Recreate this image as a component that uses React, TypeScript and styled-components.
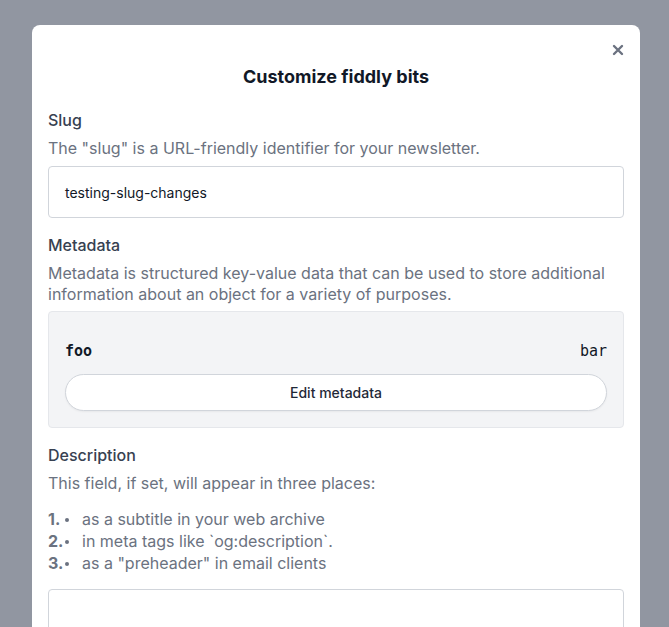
import React from 'react'
import styled, { createGlobalStyle } from 'styled-components'

const GlobalStyle = createGlobalStyle`
  html, body {
    margin: 0;
    padding: 0;
    height: 100%;
    overflow: hidden;
  }
  body {
    font-family: Inter, "Noto Sans", sans-serif;
    background: #9196a1;
  }
`

const Overlay = styled.div`
  min-height: 627px;
  padding: 25px 0 0 32px;
  box-sizing: border-box;
  background: #9196a1;
`

const Modal = styled.div`
  position: relative;
  width: 608px;
  min-height: 640px;
  box-sizing: border-box;
  background: #fff;
  border-radius: 8px 8px 0 0;
  padding: 40px 16px 24px;
`

const CloseButton = styled.button`
  position: absolute;
  top: 17px;
  right: 14px;
  width: 16px;
  height: 16px;
  padding: 0;
  border: 0;
  background: none;
  color: #6b7280;
  display: flex;
  align-items: center;
  justify-content: center;
  cursor: pointer;
`

const Title = styled.h2`
  margin: 0 0 19px;
  text-align: center;
  font-size: 18px;
  line-height: 24px;
  font-weight: 700;
  color: #111827;
`

const Field = styled.section`
  display: flex;
  flex-direction: column;
  margin-bottom: 15px;
`

const Label = styled.div`
  font-size: 16px;
  line-height: 24px;
  font-weight: 500;
  color: #374151;
  margin-bottom: 6px;
`

const Help = styled.p<{ $gap?: number }>`
  margin: 0 0 ${(p) => p.$gap ?? 7}px;
  font-size: 16px;
  line-height: 21px;
  color: #6b7280;
`

const TextInput = styled.div`
  height: 52px;
  box-sizing: border-box;
  border: 1px solid #d1d5db;
  border-radius: 4px;
  padding: 0 16px;
  display: flex;
  align-items: center;
  font-size: 14px;
  color: #111827;
`

const MetaBox = styled.div`
  background: #f3f4f6;
  border: 1px solid #e5e7eb;
  border-radius: 4px;
  padding: 27px 16px 16px;
  display: flex;
  flex-direction: column;
  gap: 11px;
`

const MetaRow = styled.div`
  display: flex;
  justify-content: space-between;
  font-family: "DejaVu Sans Mono", "Liberation Mono", monospace;
  font-size: 15px;
  line-height: 24px;
  color: #111827;
`

const MetaKey = styled.span`
  font-weight: 700;
`

const PillButton = styled.button`
  height: 37px;
  border: 1px solid #d1d5db;
  border-radius: 999px;
  background: #fff;
  font-family: Inter, sans-serif;
  font-size: 14px;
  font-weight: 500;
  color: #1f2937;
  box-shadow: 0 1px 2px rgba(0, 0, 0, 0.05);
  cursor: pointer;
`

const List = styled.ol`
  margin: 0 0 15px;
  padding: 0;
  list-style: none;
  display: flex;
  flex-direction: column;
`

const Item = styled.li`
  display: flex;
  align-items: center;
  height: 22px;
  font-size: 16px;
  line-height: 22px;
  color: #6b7280;
`

const Num = styled.span`
  font-weight: 700;
  width: 17px;
`

const Bullet = styled.span`
  width: 4px;
  height: 4px;
  border-radius: 50%;
  background: #6b7280;
  margin: 2px 13px 0 0;
`

const TextArea = styled.div`
  height: 100px;
  border: 1px solid #d1d5db;
  border-radius: 4px;
`

const uses = [
  'as a subtitle in your web archive',
  'in meta tags like `og:description`.',
  'as a "preheader" in email clients',
]

export default function App () {
  return (
    <>
      <GlobalStyle />
      <Overlay>
        <Modal>
          <CloseButton aria-label="Close">
            <svg width="12" height="12" viewBox="0 0 12 12">
              <path d="M2 2 L10 10 M10 2 L2 10" stroke="currentColor" strokeWidth="2.4" strokeLinecap="round" />
            </svg>
          </CloseButton>
          <Title>Customize fiddly bits</Title>

          <Field>
            <Label>Slug</Label>
            <Help>The "slug" is a URL-friendly identifier for your newsletter.</Help>
            <TextInput>testing-slug-changes</TextInput>
          </Field>

          <Field>
            <Label>Metadata</Label>
            <Help $gap={6}>
              Metadata is structured key-value data that can be used to store additional
              information about an object for a variety of purposes.
            </Help>
            <MetaBox>
              <MetaRow>
                <MetaKey>foo</MetaKey>
                <span>bar</span>
              </MetaRow>
              <PillButton>Edit metadata</PillButton>
            </MetaBox>
          </Field>

          <Field>
            <Label>Description</Label>
            <Help $gap={14}>This field, if set, will appear in three places:</Help>
            <List>
              {uses.map((u, i) => (
                <Item key={u}>
                  <Num>{i + 1}.</Num>
                  <Bullet />
                  <span>{u}</span>
                </Item>
              ))}
            </List>
            <TextArea />
          </Field>
        </Modal>
      </Overlay>
    </>
  )
}
